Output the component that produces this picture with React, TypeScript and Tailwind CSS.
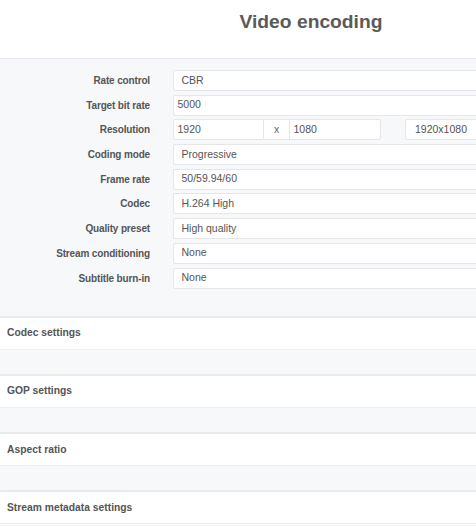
import React from "react";

const font = { fontFamily: '"Liberation Sans", Arial, sans-serif' };

function Label({ children }: { children: React.ReactNode }) {
  return (
    <div className="w-[150px] shrink-0 text-right text-[10px] font-bold text-[#555] leading-[21px] tracking-[-0.15px]">
      {children}
    </div>
  );
}

function SelectBox({ value, className = "" }: { value: string; className?: string }) {
  return (
    <div
      className={`h-[21px] bg-white border border-[#e4e6e9] rounded-[2px] pl-[7.5px] flex items-center text-[10.5px] text-[#555] ${className}`}
    >
      {value}
    </div>
  );
}

function InputBox({ value, className = "" }: { value: string; className?: string }) {
  return (
    <div
      className={`h-[21px] bg-white border border-[#e4e6e9] rounded-[2px] pl-[3.5px] flex items-center text-[10.5px] text-[#555] ${className}`}
    >
      {value}
    </div>
  );
}

function Row({ label, children }: { label: string; children: React.ReactNode }) {
  return (
    <div className="flex items-center gap-[23px]">
      <Label>{label}</Label>
      <div className="flex-1 flex">{children}</div>
    </div>
  );
}

function Section({ title }: { title: string }) {
  return (
    <div>
      <div className="h-[2px] bg-[#e8eaed]" />
      <div className="h-[32px] bg-white flex items-center pl-[7px] text-[10.3px] font-bold text-[#555] border-b border-[#eceef1]">
        {title}
      </div>
      <div className="h-[24.2px] bg-[#f7f8fa]" />
    </div>
  );
}

export default function App() {
  return (
    <div className="w-full h-screen overflow-hidden bg-[#f7f8fa]" style={font}>
      <div className="w-[622px]">
        <div className="h-[59px] bg-white border-b border-[#e3e5e8] pt-[10.5px]">
          <div className="text-center text-[19.25px] leading-[22px] font-bold text-[#5a5a5a]">
            Video encoding
          </div>
        </div>
        <div className="bg-[#f7f8fa] pt-[11px] pb-[27px] pr-[22px] flex flex-col gap-[3.7px]">
          <Row label="Rate control">
            <SelectBox value="CBR" className="flex-1" />
          </Row>
          <Row label="Target bit rate">
            <InputBox value="5000" className="flex-1" />
          </Row>
          <Row label="Resolution">
            <InputBox value="1920" className="w-[91px] rounded-r-none" />
            <div className="h-[21px] w-[25px] bg-white border-y border-[#e4e6e9] flex items-center justify-center text-[10.5px] text-[#666]">
              x
            </div>
            <InputBox value="1080" className="w-[92px] rounded-l-none" />
            <div className="w-[24px]" />
            <SelectBox value="1920x1080" className="flex-1 pl-[9px]" />
          </Row>
          <Row label="Coding mode">
            <SelectBox value="Progressive" className="flex-1" />
          </Row>
          <Row label="Frame rate">
            <SelectBox value="50/59.94/60" className="flex-1" />
          </Row>
          <Row label="Codec">
            <SelectBox value="H.264 High" className="flex-1" />
          </Row>
          <Row label="Quality preset">
            <SelectBox value="High quality" className="flex-1" />
          </Row>
          <Row label="Stream conditioning">
            <SelectBox value="None" className="flex-1" />
          </Row>
          <Row label="Subtitle burn-in">
            <SelectBox value="None" className="flex-1" />
          </Row>
        </div>
        <Section title="Codec settings" />
        <Section title="GOP settings" />
        <Section title="Aspect ratio" />
        <Section title="Stream metadata settings" />
      </div>
    </div>
  );
}
